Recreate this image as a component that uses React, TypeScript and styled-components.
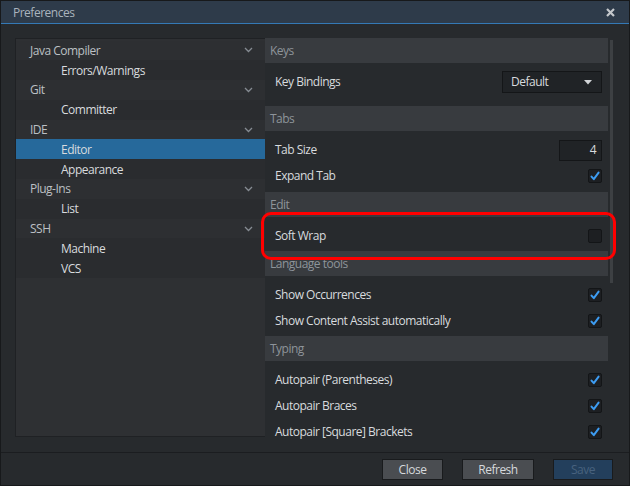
import styled, { createGlobalStyle } from 'styled-components';

const GlobalStyle = createGlobalStyle`
  html, body {
    margin: 0;
    padding: 0;
    background: #1a1c1f;
  }
  * {
    box-sizing: border-box;
  }
`;

const Window = styled.div`
  position: relative;
  width: 630px;
  height: 486px;
  display: flex;
  flex-direction: column;
  background: #272a2d;
  border: 1px solid #17191b;
  font-family: 'Open Sans', 'Noto Sans', sans-serif;
  font-size: 12px;
  letter-spacing: -0.5px;
  color: #d8dbde;
  overflow: hidden;
`;

const TitleBar = styled.div`
  height: 23px;
  flex: none;
  display: flex;
  align-items: center;
  justify-content: space-between;
  padding: 0 14px 0 12px;
  background: #2e3b4a;
  border-bottom: 1px solid #3479b6;
  color: #aab3bd;
`;

const CloseIcon = styled.svg`
  width: 9px;
  height: 9px;
  color: #c4c8cc;
`;

const Body = styled.div`
  flex: 1;
  display: flex;
  padding: 14px 15px 15px 14px;
  min-height: 0;
`;

const Tree = styled.div`
  width: 250px;
  flex: none;
  background: #2e3033;
  border: 1px solid #1f2124;
  border-right: none;
  padding-top: 1.5px;
`;

const TreeRow = styled.div<{ $child?: boolean; $selected?: boolean }>`
  height: 19.8px;
  display: flex;
  align-items: center;
  justify-content: space-between;
  padding: 0 12px 0 ${(p) => (p.$child ? '45px' : '14px')};
  background: ${(p) => (p.$selected ? '#26699b' : p.$child ? '#2a2c2f' : '#2d2f32')};
  color: ${(p) => (p.$child ? '#d8dbde' : '#bcc0c4')};
`;

const Chevron = styled.svg`
  width: 9px;
  height: 6px;
  color: #868c93;
`;

const Settings = styled.div`
  position: relative;
  flex: 1;
  overflow: hidden;
  padding-right: 6px;
  margin-bottom: -2px;
`;

const ScrollThumb = styled.div`
  position: absolute;
  right: 1px;
  top: 2px;
  width: 3px;
  height: 243px;
  background: #3d4043;
`;

const SectionHeader = styled.div`
  height: 25px;
  display: flex;
  align-items: center;
  padding-left: 5px;
  background: #383b3f;
  color: #8e949a;
`;

const Group = styled.div<{ $bottom?: number }>`
  padding: 5px 0 ${(p) => p.$bottom ?? 3}px;
`;

const Row = styled.div`
  height: 26px;
  display: flex;
  align-items: center;
  justify-content: space-between;
  padding: 2px 6px 0 10px;
  line-height: 16px;
`;

const Box = styled.div`
  width: 14px;
  height: 14px;
  border-radius: 2px;
  background: #1d1f22;
  border: 1px solid #131517;
  display: flex;
  align-items: center;
  justify-content: center;
`;

const SelectBox = styled.div`
  width: 100px;
  height: 22px;
  display: flex;
  align-items: center;
  justify-content: space-between;
  padding: 0 9px 0 8px;
  background: #202326;
  border: 1px solid #141618;
  color: #d8dbde;
`;

const NumberBox = styled.div`
  width: 43px;
  height: 21px;
  display: flex;
  align-items: center;
  justify-content: flex-end;
  padding-right: 5px;
  background: #202326;
  border: 1px solid #141618;
  color: #d8dbde;
`;

const Highlight = styled.div`
  position: absolute;
  left: 260px;
  top: 211px;
  width: 355px;
  height: 48px;
  border: 3px solid #ff0000;
  border-radius: 10px;
  pointer-events: none;
`;

const Footer = styled.div`
  height: 33px;
  flex: none;
  display: flex;
  justify-content: flex-end;
  align-items: flex-start;
  gap: 19px;
  padding: 6px 16px 0 0;
  border-top: 1px solid #1b1d20;
  position: relative;
  z-index: 1;
  background: #272a2d;
`;

const Button = styled.button<{ $width: number; $primary?: boolean }>`
  width: ${(p) => p.$width}px;
  height: 21px;
  padding: 0;
  font-family: inherit;
  font-size: 12px;
  letter-spacing: -0.5px;
  border: 1px solid #191b1d;
  background: ${(p) => (p.$primary ? '#233f5c' : '#4a4d51')};
  color: ${(p) => (p.$primary ? '#48627e' : '#d6d9dc')};
`;

const tree = [
  { label: 'Java Compiler' },
  { label: 'Errors/Warnings', child: true },
  { label: 'Git' },
  { label: 'Committer', child: true },
  { label: 'IDE' },
  { label: 'Editor', child: true, selected: true },
  { label: 'Appearance', child: true },
  { label: 'Plug-Ins' },
  { label: 'List', child: true },
  { label: 'SSH' },
  { label: 'Machine', child: true },
  { label: 'VCS', child: true },
];

function Check({ checked }: { checked: boolean }) {
  return (
    <Box>
      {checked && (
        <svg width="10" height="10" viewBox="0 0 10 10">
          <path d="M1.5 5.6 L3.8 8.2 L8.6 1.6" fill="none" stroke="#3d9cf2" strokeWidth="2" strokeLinecap="round" strokeLinejoin="round" />
        </svg>
      )}
    </Box>
  );
}

function CheckRow({ label, checked }: { label: string; checked: boolean }) {
  return (
    <Row>
      <span>{label}</span>
      <Check checked={checked} />
    </Row>
  );
}

export default function App() {
  return (
    <>
      <GlobalStyle />
      <Window>
        <TitleBar>
          <span>Preferences</span>
          <CloseIcon viewBox="0 0 9 9">
            <path d="M1 1 L8 8 M8 1 L1 8" stroke="currentColor" strokeWidth="2.2" />
          </CloseIcon>
        </TitleBar>
        <Body>
          <Tree>
            {tree.map((item) => (
              <TreeRow key={item.label} $child={item.child} $selected={item.selected}>
                <span>{item.label}</span>
                {!item.child && (
                  <Chevron viewBox="0 0 9 6">
                    <path d="M1 1 L4.5 4.5 L8 1" fill="none" stroke="currentColor" strokeWidth="1.3" />
                  </Chevron>
                )}
              </TreeRow>
            ))}
          </Tree>
          <Settings>
            <ScrollThumb />
            <SectionHeader>Keys</SectionHeader>
            <Group $bottom={12}>
              <Row>
                <span>Key Bindings</span>
                <SelectBox>
                  <span>Default</span>
                  <svg width="8" height="5" viewBox="0 0 8 5">
                    <path d="M0 0 H8 L4 4.5 Z" fill="#d2d5d8" />
                  </svg>
                </SelectBox>
              </Row>
            </Group>
            <SectionHeader>Tabs</SectionHeader>
            <Group $bottom={4}>
              <Row>
                <span>Tab Size</span>
                <NumberBox>4</NumberBox>
              </Row>
              <CheckRow label="Expand Tab" checked />
            </Group>
            <SectionHeader>Edit</SectionHeader>
            <Group>
              <CheckRow label="Soft Wrap" checked={false} />
            </Group>
            <SectionHeader>Language tools</SectionHeader>
            <Group>
              <CheckRow label="Show Occurrences" checked />
              <CheckRow label="Show Content Assist automatically" checked />
            </Group>
            <SectionHeader>Typing</SectionHeader>
            <Group>
              <CheckRow label="Autopair (Parentheses)" checked />
              <CheckRow label="Autopair Braces" checked />
              <CheckRow label="Autopair [Square] Brackets" checked />
            </Group>
          </Settings>
        </Body>
        <Footer>
          <Button $width={61}>Close</Button>
          <Button $width={72}>Refresh</Button>
          <Button $width={60} $primary>
            Save
          </Button>
        </Footer>
        <Highlight />
      </Window>
    </>
  );
}
